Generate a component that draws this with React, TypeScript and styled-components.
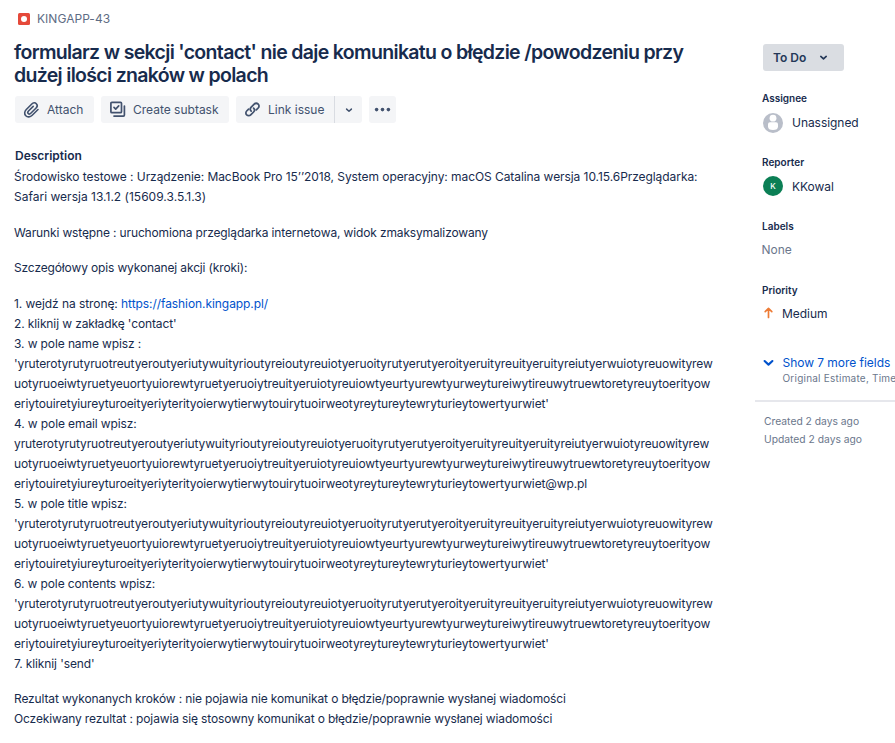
import React from "react";
import styled, { createGlobalStyle } from "styled-components";

const GlobalStyle = createGlobalStyle`
  * { box-sizing: border-box; }
  body { margin: 0; background: #fff; overflow: hidden; }
  p, h1, h2, h3 { margin: 0; }
  svg { flex: none; }
`;

const Page = styled.div`
  display: flex;
  width: 895px;
  height: 743px;
  overflow: hidden;
  background: #fff;
  color: #172b4d;
  font-family: Inter, "Liberation Sans", sans-serif;
  font-size: 12px;
`;

const Main = styled.main`
  width: 755px;
  flex: none;
  padding: 9px 0 0 14px;
`;

const Breadcrumb = styled.div`
  display: flex;
  align-items: center;
  gap: 7px;
  height: 19px;
  padding-left: 4px;
  color: #5e6c84;
  letter-spacing: 0.04px;
`;

const BugBadge = styled.span`
  display: flex;
  align-items: center;
  justify-content: center;
  width: 12px;
  height: 12px;
  margin-top: 1px;
  border-radius: 1.5px;
  background: #e5493a;

  &::after {
    content: "";
    width: 6px;
    height: 6px;
    border-radius: 50%;
    background: #fff;
  }
`;

const Title = styled.h1`
  margin-top: 13px;
  font-size: 19.5px;
  line-height: 23px;
  font-weight: 600;
  white-space: nowrap;
`;

const TitleLine = styled.span<{ $spacing: number }>`
  display: block;
  letter-spacing: ${(p) => p.$spacing}px;
`;

const Toolbar = styled.div`
  display: flex;
  gap: 7px;
  margin: 9px 0 0 1px;
`;

const ToolButton = styled.button<{ $width: number; $joined?: "left" | "right" }>`
  display: flex;
  align-items: center;
  width: ${(p) => p.$width}px;
  height: 27px;
  padding: 0 0 0 ${(p) => (p.$width > 40 ? 8 : 0)}px;
  justify-content: ${(p) => (p.$width > 40 ? "flex-start" : "center")};
  gap: 7px;
  border: 0;
  border-radius: ${(p) =>
    p.$joined === "left" ? "3px 0 0 3px" : p.$joined === "right" ? "0 3px 3px 0" : "3px"};
  background: #f4f5f7;
  color: #42526e;
  font: 400 12px Inter, sans-serif;
  letter-spacing: 0;
  white-space: nowrap;
`;

const SplitButton = styled.div`
  display: flex;
  gap: 1px;
  background: linear-gradient(#d9dce2, #d9dce2) 98px 0 / 1px 27px no-repeat;
`;

const SectionTitle = styled.h2`
  margin: 23px 0 0 1px;
  font-size: 12px;
  line-height: 20px;
  font-weight: 600;
`;

const Description = styled.div`
  display: flex;
  flex-direction: column;
  gap: 15.5px;
  margin-top: 1px;
  line-height: 20px;
  white-space: nowrap;
`;

const Line = styled.span<{ $spacing?: number }>`
  display: block;
  letter-spacing: ${(p) => p.$spacing ?? -0.11}px;
`;

const Link = styled.a`
  color: #0052cc;
  text-decoration: none;
`;

const Sidebar = styled.aside`
  flex: none;
  width: 140px;
  padding-top: 44px;
  overflow: hidden;
  white-space: nowrap;
`;

const StatusButton = styled.button`
  display: flex;
  align-items: center;
  gap: 13px;
  width: 81px;
  height: 27px;
  margin-left: 8px;
  padding: 0 0 0 10px;
  border: 0;
  border-radius: 3px;
  background: #dadde2;
  color: #253858;
  font: 600 12px Inter, sans-serif;
`;

const Field = styled.section`
  height: 64px;
  padding-left: 7px;
`;

const Fields = styled.div`
  margin-top: 19px;
`;

const FieldLabel = styled.h3`
  font-size: 10px;
  line-height: 16px;
  font-weight: 600;
`;

const FieldValue = styled.div<{ $gap?: number; $text?: boolean; $muted?: boolean }>`
  display: flex;
  align-items: center;
  gap: ${(p) => p.$gap ?? 9}px;
  height: 20px;
  margin-top: ${(p) => (p.$text ? 5 : 6)}px;
  margin-left: ${(p) => (p.$muted ? -0.5 : 0)}px;
  color: ${(p) => (p.$muted ? "#6b778c" : "#172b4d")};
  letter-spacing: -0.05px;
`;

const Avatar = styled.span`
  display: flex;
  align-items: center;
  justify-content: center;
  width: 20px;
  height: 20px;
  margin-left: 1px;
  border-radius: 50%;
  background: #0b7f55;
  color: #fff;
  font-size: 8px;
  font-weight: 500;
`;

const MoreFields = styled.div`
  display: flex;
  gap: 7.5px;
  height: 48px;
  margin-top: 8px;
  padding-left: 7px;
  border-bottom: 2px solid #e6e7ec;
  color: #0052cc;

  > svg {
    margin-top: 2px;
  }
`;

const MoreText = styled.div`
  display: flex;
  flex-direction: column;
`;

const MoreLink = styled.span`
  font-size: 12px;
  line-height: 17px;
  letter-spacing: -0.04px;
`;

const MoreHint = styled.span`
  color: #6b778c;
  font-size: 10px;
  line-height: 15px;
  letter-spacing: 0.22px;
`;

const Dates = styled.div`
  padding: 10px 0 0 9px;
  color: #6b778c;
  font-size: 10.3px;
  line-height: 18px;
`;

const Chevron = ({ size = 8, weight = 1.5 }: { size?: number; weight?: number }) => (
  <svg width={size} height={size} viewBox="0 0 8 8" fill="none" stroke="currentColor" strokeWidth={weight} strokeLinecap="round" strokeLinejoin="round">
    <path d="M1.6 3.1 4 5.3 6.4 3.1" />
  </svg>
);

const AttachIcon = () => (
  <svg width="17" height="18" viewBox="0 0 17 18" fill="none" stroke="currentColor" strokeWidth="1.6" strokeLinecap="round" strokeLinejoin="round">
    <path d="M15 8.5 9.2 14.3C7.3 16.2 4.5 16.5 2.8 14.8C1.1 13.1 1.4 10.4 3.3 8.5L8.8 3C10.1 1.7 12.1 1.5 13.3 2.7C14.5 3.9 14.4 5.7 13.1 7L7.8 12.3C7 13.1 5.9 13.2 5.2 12.5C4.5 11.8 4.7 10.8 5.5 10L10.2 5.4" />
  </svg>
);

const SubtaskIcon = () => (
  <svg width="17" height="17" viewBox="0 0 17 17" fill="none" stroke="currentColor" strokeWidth="1.7" strokeLinecap="round" strokeLinejoin="round">
    <rect x="1.9" y="1.3" width="10.6" height="10.4" rx="1" />
    <path d="m5 6.4 1.7 1.7 3-3.2" />
    <path d="M15.4 5v9.1a1 1 0 0 1-1 1H5" />
  </svg>
);

const LinkIcon = () => (
  <svg width="17" height="17" viewBox="0 0 17 17" fill="none" stroke="currentColor" strokeWidth="1.75" strokeLinecap="round" strokeLinejoin="round">
    <path d="M7.2 10.1C6.1 9 6.1 7.3 7.2 6.2L10.2 3.1C11.3 2 13.1 2 14.2 3.1C15.3 4.2 15.3 5.9 14.2 7L12.3 8.9" />
    <path d="M9.6 7.1C10.7 8.2 10.7 9.9 9.6 11L6.7 13.9C5.6 15 3.8 15 2.7 13.9C1.6 12.8 1.6 11.1 2.7 10L4.6 8.1" />
  </svg>
);

const DotsIcon = () => (
  <svg width="17" height="6" viewBox="0 0 17 6" fill="currentColor">
    <circle cx="2.6" cy="2.6" r="1.8" />
    <circle cx="8.5" cy="2.6" r="1.8" />
    <circle cx="14.4" cy="2.6" r="1.8" />
  </svg>
);

const PersonIcon = () => (
  <svg width="21" height="22" viewBox="0 -2 21 22">
    <circle cx="11" cy="10" r="10" fill="#b9bec9" />
    <circle cx="11" cy="5.2" r="3.4" fill="#fff" />
    <path d="M6 11.2Q6 9.3 8 9.3H14Q16 9.3 16 11.2V13.5Q16 17 11 17Q6 17 6 13.5Z" fill="#fff" />
  </svg>
);

const PriorityIcon = () => (
  <svg width="12" height="14" viewBox="0 0 12 14" fill="none" stroke="#ed7b35" strokeWidth="1.7" strokeLinecap="round" strokeLinejoin="round">
    <path d="M6.5 11.5V2.4M3.2 5.6 6.5 2.4 9.8 5.6" />
  </svg>
);

const LONG_START =
  "yruterotyrutyruotreutyeroutyeriutywuityrioutyreioutyreuiotyeruoityrutyerutyeroityeruityreuityeruityreiutyerwuiotyreuowityrew";
const LONG_MIDDLE =
  "uotyruoeiwtyruetyeuortyuiorewtyruetyeruoiytreuityeruiotyreuiowtyeurtyurewtyurweytureiwytireuwytruewtoretyreuytoerityow";
const LONG_END =
  "eriytouiretyiureyturoeityeriyterityoierwytierwytouirytuoirweotyreytureytewryturieytowertyurwiet";

const LongValue = ({ before = "'", after = "'" }: { before?: string; after?: string }) => (
  <>
    <Line $spacing={-0.107}>{before + LONG_START}</Line>
    <Line $spacing={-0.12}>{LONG_MIDDLE}</Line>
    <Line $spacing={-0.122}>{LONG_END + after}</Line>
  </>
);

export default function App() {
  return (
    <Page>
      <GlobalStyle />
      <Main>
        <Breadcrumb>
          <BugBadge />
          KINGAPP-43
        </Breadcrumb>
        <Title>
          <TitleLine $spacing={-0.67}>formularz w sekcji 'contact' nie daje komunikatu o błędzie /powodzeniu przy</TitleLine>
          <TitleLine $spacing={-0.68}>dużej ilości znaków w polach</TitleLine>
        </Title>
        <Toolbar>
          <ToolButton $width={79}><AttachIcon />Attach</ToolButton>
          <ToolButton $width={128}><SubtaskIcon />Create subtask</ToolButton>
          <SplitButton>
            <ToolButton $width={98} $joined="left"><LinkIcon />Link issue</ToolButton>
            <ToolButton $width={27} $joined="right"><Chevron /></ToolButton>
          </SplitButton>
          <ToolButton $width={27}><DotsIcon /></ToolButton>
        </Toolbar>
        <SectionTitle>Description</SectionTitle>
        <Description>
          <p>
            <Line $spacing={-0.068}>Środowisko testowe : Urządzenie: MacBook Pro 15ʼʼ2018, System operacyjny: macOS Catalina wersja 10.15.6Przeglądarka:</Line>
            <Line $spacing={0.01}>Safari wersja 13.1.2 (15609.3.5.1.3)</Line>
          </p>
          <p><Line $spacing={-0.14}>Warunki wstępne : uruchomiona przeglądarka internetowa, widok zmaksymalizowany</Line></p>
          <p><Line $spacing={-0.14}>Szczegółowy opis wykonanej akcji (kroki):</Line></p>
          <p>
            <Line $spacing={-0.07}>1. wejdź na stronę: <Link>https://fashion.kingapp.pl/</Link></Line>
            <Line>2. kliknij w zakładkę 'contact'</Line>
            <Line>3. w pole name wpisz :</Line>
            <LongValue />
            <Line>4. w pole email wpisz:</Line>
            <LongValue before="" after="@wp.pl" />
            <Line>5. w pole title wpisz:</Line>
            <LongValue />
            <Line>6. w pole contents wpisz:</Line>
            <LongValue />
            <Line>7. kliknij 'send'</Line>
          </p>
          <p>
            <Line $spacing={-0.14}>Rezultat wykonanych kroków : nie pojawia nie komunikat o błędzie/poprawnie wysłanej wiadomości</Line>
            <Line $spacing={-0.14}>Oczekiwany rezultat : pojawia się stosowny komunikat o błędzie/poprawnie wysłanej wiadomości</Line>
          </p>
        </Description>
      </Main>
      <Sidebar>
        <StatusButton>To Do<Chevron size={9} /></StatusButton>
        <Fields>
          <Field>
            <FieldLabel>Assignee</FieldLabel>
            <FieldValue><PersonIcon />Unassigned</FieldValue>
          </Field>
          <Field>
            <FieldLabel>Reporter</FieldLabel>
            <FieldValue><Avatar>K</Avatar>KKowal</FieldValue>
          </Field>
          <Field>
            <FieldLabel>Labels</FieldLabel>
            <FieldValue $text $muted>None</FieldValue>
          </Field>
          <Field>
            <FieldLabel>Priority</FieldLabel>
            <FieldValue $text $gap={8}><PriorityIcon />Medium</FieldValue>
          </Field>
        </Fields>
        <MoreFields>
          <Chevron size={13} weight={1.3} />
          <MoreText>
            <MoreLink>Show 7 more fields</MoreLink>
            <MoreHint>Original Estimate, Time</MoreHint>
          </MoreText>
        </MoreFields>
        <Dates>
          <div>Created 2 days ago</div>
          <div>Updated 2 days ago</div>
        </Dates>
      </Sidebar>
    </Page>
  );
}
